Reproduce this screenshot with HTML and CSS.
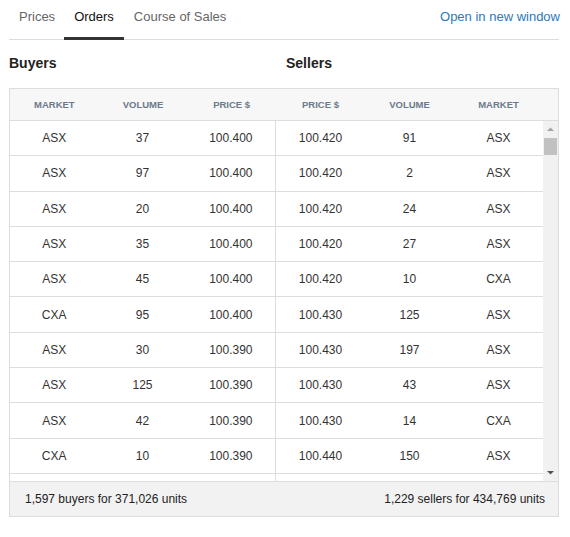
FILE: index.html
```html
<!DOCTYPE html>
<html lang="en">
<head>
<meta charset="utf-8">
<title>Orders</title>
<link rel="stylesheet" href="styles.css">
</head>
<body>
<div class="page">
  <nav class="tabs">
    <a class="tab first">Prices</a>
    <a class="tab active">Orders</a>
    <a class="tab">Course of Sales</a>
    <a class="open-link">Open in new window</a>
  </nav>

  <div class="titles">
    <h2 class="title">Buyers</h2>
    <h2 class="title sellers">Sellers</h2>
  </div>

  <div class="book">
    <div class="book-head">
      <div class="half"><span>Market</span><span>Volume</span><span>Price $</span></div>
      <div class="half right"><span>Price $</span><span>Volume</span><span>Market</span></div>
      <div class="gutter"></div>
    </div>

    <div class="book-body">
      <div class="rows">
        <div class="row"><div class="half buy"><span>ASX</span><span>37</span><span>100.400</span></div><div class="half sell"><span>100.420</span><span>91</span><span>ASX</span></div></div>
        <div class="row"><div class="half buy"><span>ASX</span><span>97</span><span>100.400</span></div><div class="half sell"><span>100.420</span><span>2</span><span>ASX</span></div></div>
        <div class="row"><div class="half buy"><span>ASX</span><span>20</span><span>100.400</span></div><div class="half sell"><span>100.420</span><span>24</span><span>ASX</span></div></div>
        <div class="row"><div class="half buy"><span>ASX</span><span>35</span><span>100.400</span></div><div class="half sell"><span>100.420</span><span>27</span><span>ASX</span></div></div>
        <div class="row"><div class="half buy"><span>ASX</span><span>45</span><span>100.400</span></div><div class="half sell"><span>100.420</span><span>10</span><span>CXA</span></div></div>
        <div class="row"><div class="half buy"><span>CXA</span><span>95</span><span>100.400</span></div><div class="half sell"><span>100.430</span><span>125</span><span>ASX</span></div></div>
        <div class="row"><div class="half buy"><span>ASX</span><span>30</span><span>100.390</span></div><div class="half sell"><span>100.430</span><span>197</span><span>ASX</span></div></div>
        <div class="row"><div class="half buy"><span>ASX</span><span>125</span><span>100.390</span></div><div class="half sell"><span>100.430</span><span>43</span><span>ASX</span></div></div>
        <div class="row"><div class="half buy"><span>ASX</span><span>42</span><span>100.390</span></div><div class="half sell"><span>100.430</span><span>14</span><span>CXA</span></div></div>
        <div class="row"><div class="half buy"><span>CXA</span><span>10</span><span>100.390</span></div><div class="half sell"><span>100.440</span><span>150</span><span>ASX</span></div></div>
        <div class="row"><div class="half buy"></div><div class="half sell"></div></div>
      </div>
      <div class="scrollbar">
        <svg class="arrow up" width="15" height="15" viewBox="0 0 15 15"><path d="M4 10 L7.5 6.5 L11 10 Z" fill="#a3a3a3"/></svg>
        <div class="thumb"></div>
        <div class="track"></div>
        <svg class="arrow down" width="15" height="15" viewBox="0 0 15 15"><path d="M4 5 L7.5 8.5 L11 5 Z" fill="#505050"/></svg>
      </div>
    </div>

    <div class="book-foot">
      <span>1,597 buyers for 371,026 units</span>
      <span>1,229 sellers for 434,769 units</span>
    </div>
  </div>
</div>
</body>
</html>
```

FILE: styles.css
```css
* { box-sizing: border-box; }

body {
  margin: 0;
  background: #fff;
  font-family: "Liberation Sans", Arial, sans-serif;
  color: #333;
}

.page {
  width: 570px;
  padding: 0 11px 0 9px;
}

/* Tabs */
.tabs {
  display: flex;
  align-items: flex-start;
  border-bottom: 1px solid #dddddd;
  height: 40px;
}

.tab {
  display: block;
  height: 40px;
  padding: 0 10px;
  line-height: 34px;
  font-size: 13px;
  color: #666;
  border-bottom: 3px solid transparent;
  cursor: pointer;
}

.tab.first { margin-right: -1px; }

.tab.active {
  color: #111;
  border-bottom-color: #333;
}

.open-link {
  margin-left: auto;
  margin-right: -1px;
  line-height: 34px;
  font-size: 13px;
  color: #2a79c2;
  cursor: pointer;
}

/* Titles */
.titles {
  display: grid;
  grid-template-columns: 276px 1fr;
  height: 48px;
  align-items: center;
  padding-bottom: 2px;
}

.title {
  margin: 0;
  font-size: 14px;
  font-weight: bold;
  color: #222;
}

.sellers { padding-left: 1px; }

/* Order book */
.book {
  width: 550px;
  border: 1px solid #dddddd;
}

.book-head {
  display: flex;
  height: 32px;
  background: #f7f7f7;
  border-bottom: 1px solid #dddddd;
}

.half {
  display: grid;
  grid-template-columns: repeat(3, 1fr);
  align-items: center;
  text-align: center;
}

.book-head .half:first-child { width: 266px; }
.book-head .half.right { width: 267px; }
.book-head .gutter { width: 15px; }

.book-head span {
  font-size: 9.5px;
  font-weight: bold;
  text-transform: uppercase;
  color: #6b7a8b;
}

.book-body {
  display: flex;
  height: 360px;
  overflow: hidden;
}

.rows {
  width: 533px;
}

.row {
  display: flex;
  height: 35.3px;
  border-bottom: 1px solid #dddddd;
  font-size: 12px;
  color: #333;
}

.half.buy {
  width: 266px;
  border-right: 1px solid #dddddd;
}

.half.sell {
  width: 267px;
}

/* Scrollbar */
.scrollbar {
  width: 15px;
  background: #f1f1f1;
  display: flex;
  flex-direction: column;
}

.arrow { display: block; flex: none; }

.thumb {
  flex: none;
  height: 17px;
  margin: 2px 0 0 1px;
  width: 13px;
  background: #c1c1c1;
}

.track { flex: 1; }

/* Footer */
.book-foot {
  display: flex;
  justify-content: space-between;
  align-items: center;
  height: 35px;
  padding: 0 13px 0 15px;
  background: #f2f2f2;
  border-top: 1px solid #dddddd;
  font-size: 12px;
  color: #222;
}
```
